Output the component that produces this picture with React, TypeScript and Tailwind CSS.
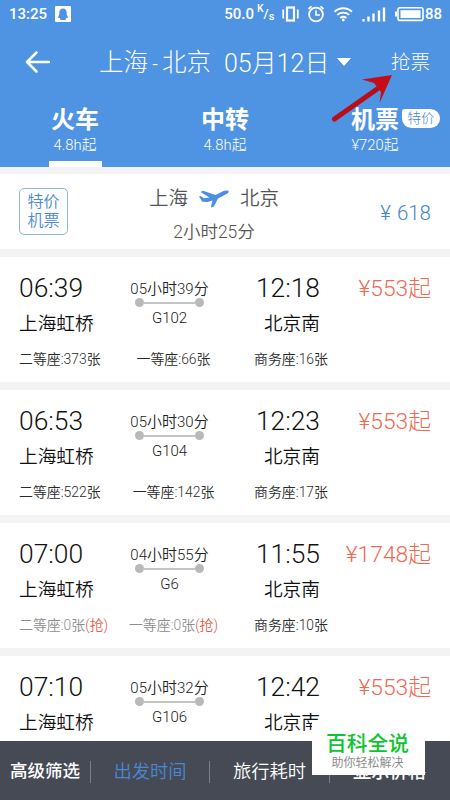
import React from "react";

type Seat = { label: string; count: string; soldOut?: boolean };
type Train = {
  depart: string;
  arrive: string;
  duration: string;
  code: string;
  price: string;
  seats: Seat[];
};

const trains: Train[] = [
  {
    depart: "06:39", arrive: "12:18", duration: "05小时39分", code: "G102", price: "¥553起",
    seats: [{ label: "二等座", count: "373张" }, { label: "一等座", count: "66张" }, { label: "商务座", count: "16张" }],
  },
  {
    depart: "06:53", arrive: "12:23", duration: "05小时30分", code: "G104", price: "¥553起",
    seats: [{ label: "二等座", count: "522张" }, { label: "一等座", count: "142张" }, { label: "商务座", count: "17张" }],
  },
  {
    depart: "07:00", arrive: "11:55", duration: "04小时55分", code: "G6", price: "¥1748起",
    seats: [{ label: "二等座", count: "0张", soldOut: true }, { label: "一等座", count: "0张", soldOut: true }, { label: "商务座", count: "10张" }],
  },
  {
    depart: "07:10", arrive: "12:42", duration: "05小时32分", code: "G106", price: "¥553起",
    seats: [],
  },
];

function StatusBar() {
  return (
    <div className="flex h-[28px] items-center pl-[9px] pr-[8px] text-[15px] font-medium leading-[28px]">
      <span className="w-[46px]">13:25</span>
      <svg width="16" height="16" viewBox="0 0 16 16" className="shrink-0">
        <rect width="16" height="16" rx="1" fill="#fff" />
        <path d="M8 2.400c-2.500 0-3.700 1.800-3.700 4v1.800L3.300 10.800v1.200h1.300l.8 1-.4 1h6l-.4-1 .8-1h1.300v-1.200L11.700 8.200V6.400c0-2.200-1.200-4-3.700-4Z" fill="#4f93e3" />
      </svg>
      <span className="ml-auto">50.0</span>
      <span className="ml-[3px] mr-[2px] flex w-[16px] text-[10.500px] leading-none">
        <span className="-mt-[3px]">K</span>
        <span className="text-[13px]">/</span>
        <span className="mt-[4px] text-[11px]">s</span>
      </span>
      <svg width="150" height="20" viewBox="0 0 150 20" className="ml-[7px] shrink-0" fill="none" stroke="#fff">
        <rect x="5" y="3.500" width="7" height="13" strokeWidth="2.200" />
        <path d="M1.200 5.500v9M15.800 5.500v9" strokeWidth="1.800" />
        <circle cx="34" cy="10.500" r="6.900" strokeWidth="1.800" />
        <path d="M34 6.500v4.500h4M26.500 5l3-2.600M41.500 5l-3-2.600" strokeWidth="1.700" />
        <path d="M52.500 7.700c5-4.700 12.500-4.700 17.500 0M55.300 10.900c3.500-3 8.400-3 11.900 0M58.200 13.900c2-1.500 4.200-1.500 6.200 0" strokeWidth="1.900" />
        <circle cx="61.300" cy="16" r="1.400" fill="#fff" stroke="none" />
        <path d="M81.500 15v2.500M86.500 12.500v5M91.500 9.500v8M97 6.500v11M102 3.500v14" strokeWidth="2.400" />
        <rect x="116" y="3.800" width="25" height="12.600" rx="2" strokeWidth="1.600" />
        <rect x="118.500" y="6.200" width="20" height="7.800" fill="#fff" stroke="none" />
        <path d="M114 7.500v5" strokeWidth="2" />
      </svg>
      <span className="-ml-[7px]">88</span>
    </div>
  );
}

function Header() {
  return (
    <header className="relative h-[167px] shrink-0 bg-[#4f93e3] text-white">
      <StatusBar />
      <div className="flex h-[68px] items-center pl-[25px] pr-[20px]">
        <svg width="25" height="22" viewBox="0 0 25 22" fill="none" stroke="#fff" strokeWidth="2.500" strokeLinejoin="round" strokeLinecap="round">
          <path d="M11.500 1.500 2 11l9.500 9.500M2 11h22" />
        </svg>
        <div className="ml-[49px] flex items-center whitespace-nowrap pt-[3px] text-[24.5px] font-light">
          <span>上海</span>
          <span className="w-[14px] text-center text-[20px]">-</span>
          <span>北京</span>
          <span className="ml-[13px] text-[25px]">05月12日</span>
        </div>
        <svg width="14" height="8" viewBox="0 0 14 8" className="ml-[8px] shrink-0">
          <path d="M0 0h14L7 8z" fill="#fff" />
        </svg>
        <span className="ml-auto pt-[2px] text-[19.5px] font-light">抢票</span>
      </div>
      <nav className="grid h-[71px] grid-cols-3 text-center">
        <div className="flex flex-col items-center">
          <span className="mt-[11px] h-[26px] text-[24px] font-bold leading-[26px]">火车</span>
          <span className="mt-[2px] h-[20px] text-[14.800px] font-light leading-[20px]">4.8h起</span>
          <span className="mt-auto h-[6px] w-[53px] bg-white" />
        </div>
        <div className="flex flex-col items-center">
          <span className="mt-[11px] h-[26px] text-[24px] font-bold leading-[26px]">中转</span>
          <span className="mt-[2px] h-[20px] text-[14.800px] font-light leading-[20px]">4.8h起</span>
        </div>
        <div className="flex flex-col items-center">
          <span className="relative mt-[11px] h-[26px] text-[24px] font-bold leading-[26px]">
            机票
            <span className="absolute left-[51px] top-[2px] h-[19px] w-[38px] rounded-[10px] rounded-tl-[3px] bg-white text-center text-[13.5px] font-light leading-[19px] text-[#3f7fcb]">特价</span>
          </span>
          <span className="mt-[2px] h-[20px] text-[14.800px] font-light leading-[20px]">¥720起</span>
        </div>
      </nav>
      <svg width="64" height="52" viewBox="0 0 64 52" className="absolute left-[330px] top-[72px]">
        <path d="M4.500 47 50 15" stroke="#b90d18" strokeWidth="5" strokeLinecap="round" />
        <path d="M62 3 32 7.500 44 11l7 9-1.500 11z" fill="#c40d18" />
      </svg>
    </header>
  );
}

function FlightCard() {
  return (
    <section className="flex h-[75px] shrink-0 items-center bg-white pl-[19px] pr-[19px]">
      <div className="flex h-[47px] w-[49px] flex-col items-center justify-center rounded-[5px] border border-[#8fb5e0] pb-[2px] text-[16px] font-[350] leading-[19px] text-[#4a8ad4]">
        <span>特价</span>
        <span>机票</span>
      </div>
      <div className="ml-[59px] w-[174px] pt-[7px] text-center font-[350] text-[#555]">
        <div className="flex h-[30px] items-center justify-center gap-[11px] text-[19.5px]">
          <span>上海</span>
          <svg width="30" height="18" viewBox="0 0 30 18" fill="#4a8fe0">
            <path d="M0 6.500 1.500 6l3.500 2.200 5.500-.7L1.500 2 4 .8 16.500 5l7-3.500C26 .3 29 .2 29.600 1.300c.6 1.200-1.700 2.700-4 3.800L19 8.500l-4.300 8.200-2.800.8 1.600-7-5 1.600-5.200-.4z" />
          </svg>
          <span>北京</span>
        </div>
        <div className="mt-[3px] h-[30px] text-[17.5px] leading-[30px]">2小时25分</div>
      </div>
      <span className="ml-auto flex items-center pt-[3px] text-[20.500px] font-light text-[#4583cf]">
        <span className="mr-[6px]">¥</span>618
      </span>
    </section>
  );
}

function SeatText({ seat }: { seat: Seat }) {
  return (
    <span className={seat.soldOut ? "text-[#8e8e8e]" : "text-[#2a2a2a]"}>
      {seat.label}:{seat.count}
      {seat.soldOut && <span className="text-[#e0614c]">(抢)</span>}
    </span>
  );
}

function TrainRow({ train }: { train: Train }) {
  return (
    <section className="h-[125px] shrink-0 bg-white pl-[19px] pr-[19px] font-[350]">
      <div className="flex h-[86px] whitespace-nowrap">
        <div className="w-[90px] text-[#111]">
          <div className="mt-[15px] h-[32px] text-[26.400px] leading-[32px]">{train.depart}</div>
          <div className="mt-[7px] h-[26px] text-[18.700px] leading-[26px]">上海虹桥</div>
        </div>
        <div className="flex w-[121px] flex-col items-center text-[15px] text-[#222]">
          <div className="mt-[22px] h-[20px] leading-[20px]">{train.duration}</div>
          <div className="-mt-px flex h-[9px] w-[69px] items-center">
            <span className="size-[9px] rounded-full bg-[#b9b9b9]" />
            <span className="h-[2px] flex-1 bg-[#c4c4c4]" />
            <span className="size-[9px] rounded-full bg-[#b9b9b9]" />
          </div>
          <div className="mt-[1px] h-[20px] leading-[20px]">{train.code}</div>
        </div>
        <div className="w-[90px] text-right text-[#111]">
          <div className="mt-[15px] h-[32px] text-[26.400px] leading-[32px]">{train.arrive}</div>
          <div className="mt-[7px] h-[26px] text-[18.700px] leading-[26px]">北京南</div>
        </div>
        <div className="ml-auto mt-[16px] h-[32px] text-[22.800px] font-light leading-[32px] text-[#ee6a52]">{train.price}</div>
      </div>
      {train.seats.length > 0 && (
        <div className="flex h-[32px] items-center whitespace-nowrap text-[13.900px]">
          <div className="w-[90px]"><SeatText seat={train.seats[0]} /></div>
          <div className="w-[129px] text-center"><SeatText seat={train.seats[1]} /></div>
          <div className="w-[106px] text-center"><SeatText seat={train.seats[2]} /></div>
        </div>
      )}
    </section>
  );
}

function BottomBar() {
  return (
    <footer className="flex h-[59px] shrink-0 items-center bg-[#464a55] pt-[2px] text-center text-[18.300px] font-[350] text-white">
      <span className="w-[90px] text-[17.500px] font-medium">高级筛选</span>
      <span className="h-[22px] w-px bg-[#7b7e86]" />
      <span className="w-[118px] text-[#4a88d6]">出发时间</span>
      <span className="h-[22px] w-px bg-[#7b7e86]" />
      <span className="w-[119px]">旅行耗时</span>
      <span className="h-[22px] w-px bg-[#7b7e86]" />
      <span className="w-[119px] font-medium">显示价格</span>
    </footer>
  );
}

export default function App() {
  return (
    <div className="relative flex h-[800px] w-[450px] flex-col overflow-hidden bg-[#f3f3f4] font-[Roboto,'Noto_Sans_CJK_SC',sans-serif]">
      <Header />
      <main className="flex h-[574px] shrink-0 flex-col gap-[8px] overflow-hidden pt-[7px]">
        <FlightCard />
        {trains.map((t) => (
          <TrainRow key={t.code} train={t} />
        ))}
      </main>
      <BottomBar />
      <div className="absolute left-[312px] top-[720px] flex h-[55px] w-[113px] flex-col items-center bg-white">
        <span className="-ml-[2px] mt-[11px] h-[26px] text-[20.700px] font-medium leading-[26px] text-[#0cc52f]">百科全说</span>
        <span className="-ml-[2px] h-[14px] text-[12px] leading-[12px] text-[#8c8c8c]">助你轻松解决</span>
      </div>
    </div>
  );
}
